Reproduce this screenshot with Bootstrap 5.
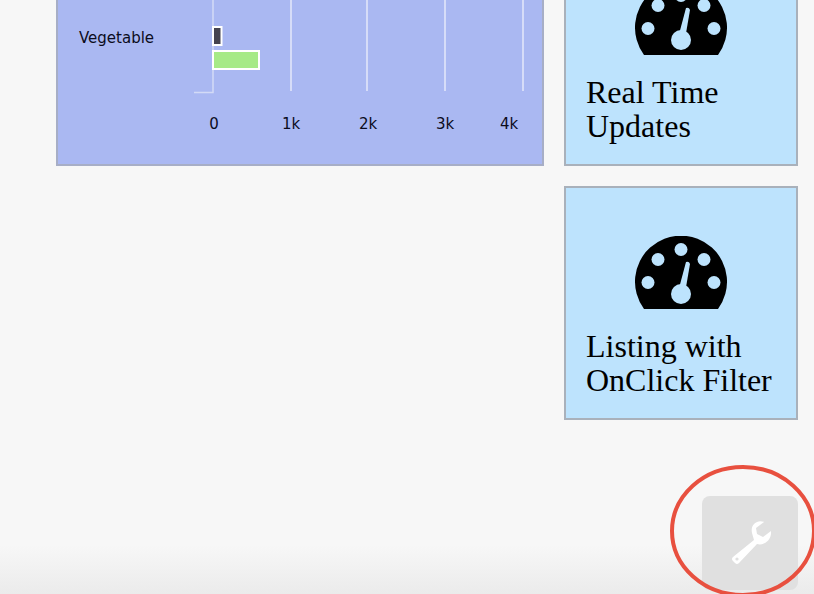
<!DOCTYPE html>
<html lang="en">
<head>
    <meta charset="UTF-8">
    <meta name="viewport" content="width=device-width, initial-scale=1.0">
    <title>Dashboard</title>
    <link href="https://cdn.jsdelivr.net/npm/bootstrap@5.3.0/dist/css/bootstrap.min.css" rel="stylesheet">
    <style>
        html, body { height: 594px; overflow: hidden; }
        body { background: linear-gradient(#f7f7f7 545px, #ebebeb 594px); position: relative; }
        .dash-wrap { margin: -68px 16px 0 56px; gap: 20px; }
        .chart-panel { width: 488px; height: 234px; background: #aab8f2; border: 2px solid #a7aec6; }
        .chart-panel svg { display: block; }
        .chart-panel text { font-family: "DejaVu Sans", sans-serif; font-size: 15px; fill: #0c0c1c; }
        .tile-col { gap: 20px; width: 234px; }
        .tile { height: 234px; background: #bde3fd; border: 2px solid #a9b1bb; padding: 48px 10px 0 20px; }
        .tile svg { display: block; margin-left: 49px; }
        .tile-label { font-family: "Liberation Serif", "Times New Roman", serif; font-size: 32px; line-height: 34px; color: #000; margin-top: 20px; }
        .gauge-hole { fill: #bde3fd; }
        .tool-btn { position: absolute; left: 702px; top: 496px; width: 96px; height: 94px; border-radius: 8px; background: #e0e0e0; }
        .tool-ring { position: absolute; left: 670px; top: 465px; }
    </style>
</head>
<body>
    <div class="dash-wrap d-flex align-items-start">
        <div class="chart-panel flex-shrink-0">
            <svg width="484" height="230" viewBox="58 -66 484 230">
                <g stroke="#e4e8fa" stroke-width="1.5">
                    <line x1="291" y1="-66" x2="291" y2="91"/>
                    <line x1="367" y1="-66" x2="367" y2="91"/>
                    <line x1="445" y1="-66" x2="445" y2="91"/>
                    <line x1="523" y1="-66" x2="523" y2="91"/>
                </g>
                <path d="M213 -66V92.500H194" fill="none" stroke="#d3daf6" stroke-width="1.500"/>
                <rect x="213" y="27" width="8.500" height="18" fill="#45434f" stroke="#fff" stroke-width="2"/>
                <rect x="213" y="51" width="46" height="18" fill="#a6ea87" stroke="#fff" stroke-width="2"/>
                <text x="79" y="43">Vegetable</text>
                <text x="214" y="129" text-anchor="middle">0</text>
                <text x="291" y="129" text-anchor="middle">1k</text>
                <text x="368" y="129" text-anchor="middle">2k</text>
                <text x="445" y="129" text-anchor="middle">3k</text>
                <text x="509" y="129" text-anchor="middle">4k</text>
            </svg>
        </div>
        <div class="tile-col d-flex flex-column flex-shrink-0">
            <div class="tile">
                <svg width="92" height="73" viewBox="0 0 92 73">
                    <path d="M9 73A46 46 0 1 1 83 73Z"/>
                    <g class="gauge-hole">
                        <circle cx="46" cy="13.500" r="6.500"/>
                        <circle cx="23" cy="23.500" r="6.500"/>
                        <circle cx="69" cy="23.500" r="6.500"/>
                        <circle cx="13" cy="46.500" r="6.500"/>
                        <circle cx="79" cy="46.500" r="6.500"/>
                        <circle cx="46" cy="58" r="10"/>
                        <path d="M43 56L51 26Q54 25 55 28L50 57Z"/>
                    </g>
                </svg>
                <div class="tile-label">Real Time Updates</div>
            </div>
            <div class="tile">
                <svg width="92" height="73" viewBox="0 0 92 73">
                    <path d="M9 73A46 46 0 1 1 83 73Z"/>
                    <g class="gauge-hole">
                        <circle cx="46" cy="13.500" r="6.500"/>
                        <circle cx="23" cy="23.500" r="6.500"/>
                        <circle cx="69" cy="23.500" r="6.500"/>
                        <circle cx="13" cy="46.500" r="6.500"/>
                        <circle cx="79" cy="46.500" r="6.500"/>
                        <circle cx="46" cy="58" r="10"/>
                        <path d="M43 56L51 26Q54 25 55 28L50 57Z"/>
                    </g>
                </svg>
                <div class="tile-label">Listing with OnClick Filter</div>
            </div>
        </div>
    </div>

    <div class="tool-btn d-flex align-items-center justify-content-center">
        <svg width="46" height="46" viewBox="0 0 46 46">
            <path d="M27 21L6 38Q4 40 6 42L8 44Q10 46 12 44L30 25C37 27 45 21 44 12L36 18L30 15L29 9L37 3C31 0 23 5 25 14Z" transform="translate(0 -1)" fill="#fff"/>
            <circle cx="10" cy="39" r="1.600" fill="#e0e0e0"/>
        </svg>
    </div>
    <svg class="tool-ring" width="146" height="132" viewBox="0 0 146 132">
        <ellipse cx="73" cy="66" rx="71" ry="64" fill="none" stroke="#e8503f" stroke-width="4"/>
    </svg>

    <script src="https://cdn.jsdelivr.net/npm/bootstrap@5.3.0/dist/js/bootstrap.bundle.min.js"></script>
</body>
</html>
